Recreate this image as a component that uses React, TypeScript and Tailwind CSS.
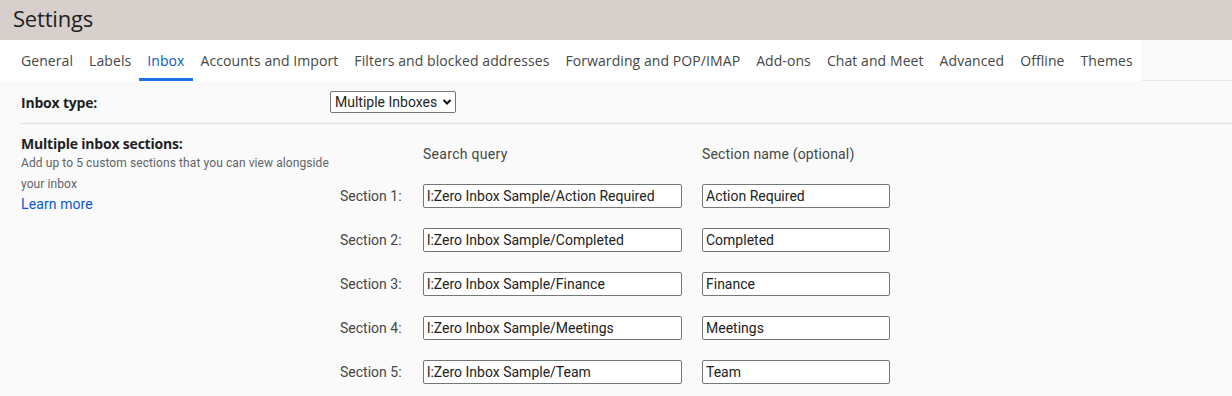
import React from "react";

const tabs = [
  "General",
  "Labels",
  "Inbox",
  "Accounts and Import",
  "Filters and blocked addresses",
  "Forwarding and POP/IMAP",
  "Add-ons",
  "Chat and Meet",
  "Advanced",
  "Offline",
  "Themes",
];

const sections = [
  ["l:Zero Inbox Sample/Action Required", "Action Required"],
  ["l:Zero Inbox Sample/Completed", "Completed"],
  ["l:Zero Inbox Sample/Finance", "Finance"],
  ["l:Zero Inbox Sample/Meetings", "Meetings"],
  ["l:Zero Inbox Sample/Team", "Team"],
];

export default function App() {
  return (
    <div className="w-[1232px] h-[396px] overflow-hidden bg-[#fafafa] font-['Roboto',sans-serif] text-[#1f1f1f]">
      <div className="h-[40px] bg-[#d7cfcb] flex items-center pl-[13px] pb-[4px] text-[22px] font-['Open_Sans',sans-serif] text-[#1f1f1f] tracking-[-0.2px]">
        Settings
      </div>
      <div className="flex h-[41px]">
        <div className="w-[1141px] bg-white flex pl-[13px] h-[41px]">
          {tabs.map((t) => (
            <div
              key={t}
              className={
                "px-[8px] h-full flex items-center text-[14px] font-['Open_Sans',sans-serif] tracking-[0.08px] border-b-[3px] pt-[3px] " +
                (t === "Inbox"
                  ? "text-[#0b57d0] border-[#1a73e8]"
                  : "text-[#444746] border-transparent")
              }
            >
              {t}
            </div>
          ))}
        </div>
        <div className="flex-1 border-b border-[#e8e8e8] h-[41px]" />
      </div>
      <div className="pl-[21px]">
        <div className="h-[42px] flex items-center">
          <div className="w-[309px] text-[14px] font-bold text-[#1f1f1f] font-['Open_Sans',sans-serif] tracking-[-0.2px]">
            Inbox type:
          </div>
          <div className="h-[22px] w-[126px] border border-[#767676] rounded-[2px] bg-white flex items-center pl-[4px] pr-[3px] justify-between text-[14px] text-[#1f1f1f]">
            <span>Multiple Inboxes</span>
            <svg width="10" height="10" viewBox="0 0 10 10">
              <path d="M1.5 3 L5 6.5 L8.5 3" stroke="#111" strokeWidth="2" fill="none" />
            </svg>
          </div>
        </div>
        <div className="border-t border-[#e1e1e1] flex">
          <div className="w-[319px] pt-[10px]">
            <div className="text-[14px] leading-[20px] font-bold font-['Open_Sans',sans-serif] tracking-[-0.2px] text-[#1f1f1f]">
              Multiple inbox sections:
            </div>
            <div className="text-[12px] leading-[21px] text-[#5f6368] mt-[-1px] tracking-[0.09px]">
              Add up to 5 custom sections that you can view alongside your inbox
            </div>
            <div className="text-[14px] leading-[20px] text-[#0b57d0] mt-[-1px] tracking-[0.1px]">
              Learn more
            </div>
          </div>
          <div className="pt-[20px]">
            <div className="flex text-[14px] leading-[20px] text-[#444746]">
              <div className="w-[83px]" />
              <div className="w-[279px] tracking-[0.3px]">Search query</div>
              <div className="tracking-[0.15px]">Section name (optional)</div>
            </div>
            <div className="flex flex-col gap-[20px] mt-[20px]">
              {sections.map(([q, n], i) => (
                <div key={i} className="flex items-center h-[24px]">
                  <div className="w-[83px] text-[14px] text-[#444746]">
                    Section {i + 1}:
                  </div>
                  <div className="w-[259px] h-[24px] border border-[#767676] rounded-[2px] bg-white flex items-center pl-[3px] text-[14px] text-[#222]">
                    {q}
                  </div>
                  <div className="w-[20px]" />
                  <div className="w-[188px] h-[24px] border border-[#767676] rounded-[2px] bg-white flex items-center pl-[3px] text-[14px] text-[#222]">
                    {n}
                  </div>
                </div>
              ))}
            </div>
          </div>
        </div>
      </div>
    </div>
  );
}
